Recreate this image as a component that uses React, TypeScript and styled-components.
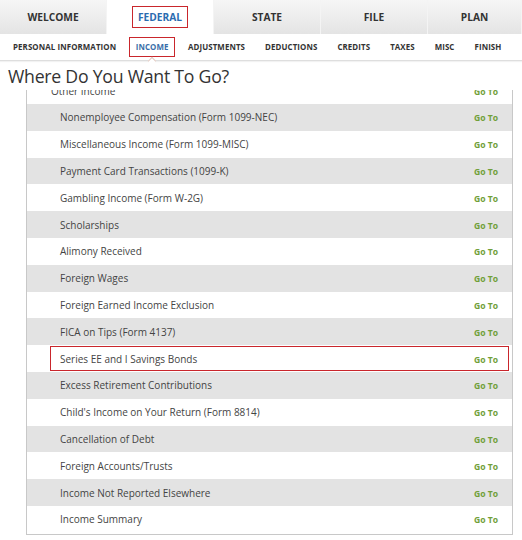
import React from 'react';
import styled, { createGlobalStyle } from 'styled-components';

const GlobalStyle = createGlobalStyle`
  html, body {
    margin: 0;
    padding: 0;
    background: #fff;
    font-family: 'Open Sans', 'Liberation Sans', sans-serif;
  }
`;

type ActiveProps = { $active?: boolean };

const tabs = ['WELCOME', 'FEDERAL', 'STATE', 'FILE', 'PLAN'];
const steps = [
  'PERSONAL INFORMATION',
  'INCOME',
  'ADJUSTMENTS',
  'DEDUCTIONS',
  'CREDITS',
  'TAXES',
  'MISC',
  'FINISH',
];

const items = [
  'Nonemployee Compensation (Form 1099-NEC)',
  'Miscellaneous Income (Form 1099-MISC)',
  'Payment Card Transactions (1099-K)',
  'Gambling Income (Form W-2G)',
  'Scholarships',
  'Alimony Received',
  'Foreign Wages',
  'Foreign Earned Income Exclusion',
  'FICA on Tips (Form 4137)',
  'Series EE and I Savings Bonds',
  'Excess Retirement Contributions',
  "Child's Income on Your Return (Form 8814)",
  'Cancellation of Debt',
  'Foreign Accounts/Trusts',
  'Income Not Reported Elsewhere',
  'Income Summary',
];

const TabBar = styled.div`
  display: grid;
  grid-template-columns: repeat(4, 107px) 1fr;
  height: 34px;
  background: linear-gradient(#f6f6f6, #e4e4e4);
`;

const Tab = styled.div<ActiveProps>`
  display: flex;
  align-items: center;
  justify-content: center;
  font-size: 10.2px;
  font-weight: 700;
  color: ${(p) => (p.$active ? '#2b6bb0' : '#333')};
  background: ${(p) => (p.$active ? '#fff' : 'transparent')};
  border-right: 1px solid #f4f4f4;
`;

const Boxed = styled.span<ActiveProps>`
  padding: ${(p) => (p.$active ? '3px 5px' : '0')};
  border: ${(p) => (p.$active ? '1.5px solid #c9262c' : 'none')};
`;

const SubNav = styled.div`
  display: flex;
  align-items: center;
  gap: 20px;
  height: 26px;
  padding-left: 13px;
  border-bottom: 1px solid #dedede;
  box-shadow: 0 1px 1px rgba(0, 0, 0, 0.05);
`;

const Step = styled.div<ActiveProps>`
  position: relative;
  font-size: 7.9px;
  font-weight: 700;
  letter-spacing: 0.1px;
  color: ${(p) => (p.$active ? '#3a6ea8' : '#333')};
  padding: ${(p) => (p.$active ? '4px 6px' : '0')};
  margin: ${(p) => (p.$active ? '0 -7.5px' : '0')};
  border: ${(p) => (p.$active ? '1.5px solid #c9262c' : 'none')};
`;

const Caret = styled.span`
  position: absolute;
  left: 50%;
  bottom: -8px;
  width: 5px;
  height: 5px;
  margin-left: -3px;
  background: #fff;
  border-left: 1px solid #e2c9c0;
  border-top: 1px solid #e2c9c0;
  transform: rotate(45deg);
`;

const Title = styled.h1`
  margin: 4px 0 0 8px;
  height: 23px;
  font-size: 17.7px;
  font-weight: 400;
  letter-spacing: -0.25px;
  line-height: 22px;
  color: #333;
`;

const Panel = styled.div`
  margin-left: 26px;
  width: 485px;
  height: 444px;
  border: 1px solid #c8c8c8;
  border-top: none;
`;

const Viewport = styled.div`
  margin-top: 2px;
  height: 442px;
  overflow: hidden;
`;

const List = styled.div`
  margin-top: -12.8px;
`;

const Row = styled.div<{ $shaded?: boolean }>`
  display: flex;
  align-items: center;
  height: 26.8px;
  padding: 0 3px 0 23px;
  background: ${(p) => (p.$shaded ? '#e3e3e3' : '#fff')};
`;

const RowInner = styled.div<{ $highlight?: boolean; $parent?: boolean }>`
  flex: 1;
  display: flex;
  align-items: center;
  justify-content: space-between;
  height: 23px;
  padding: 0 10px 0 ${(p) => (p.$parent ? '0' : '9px')};
  border: 1.5px solid ${(p) => (p.$highlight ? '#c9262c' : 'transparent')};
`;

const Label = styled.span`
  font-size: 10px;
  color: #444;
`;

const GoTo = styled.span`
  font-size: 8.6px;
  font-weight: 700;
  color: #71a03a;
  margin-top: 2px;
`;

export default function App() {
  return (
    <>
      <GlobalStyle />
      <TabBar>
        {tabs.map((t) => (
          <Tab key={t} $active={t === 'FEDERAL'}>
            <Boxed $active={t === 'FEDERAL'}>{t}</Boxed>
          </Tab>
        ))}
      </TabBar>
      <SubNav>
        {steps.map((s) => (
          <Step key={s} $active={s === 'INCOME'}>
            {s}
            {s === 'INCOME' && <Caret />}
          </Step>
        ))}
      </SubNav>
      <Title>Where Do You Want To Go?</Title>
      <Panel>
        <Viewport>
          <List>
            <Row>
              <RowInner $parent>
                <Label>Other Income</Label>
                <GoTo>Go To</GoTo>
              </RowInner>
            </Row>
            {items.map((item, i) => (
              <Row key={item} $shaded={i % 2 === 0}>
                <RowInner $highlight={item === 'Series EE and I Savings Bonds'}>
                  <Label>{item}</Label>
                  <GoTo>Go To</GoTo>
                </RowInner>
              </Row>
            ))}
          </List>
        </Viewport>
      </Panel>
    </>
  );
}
